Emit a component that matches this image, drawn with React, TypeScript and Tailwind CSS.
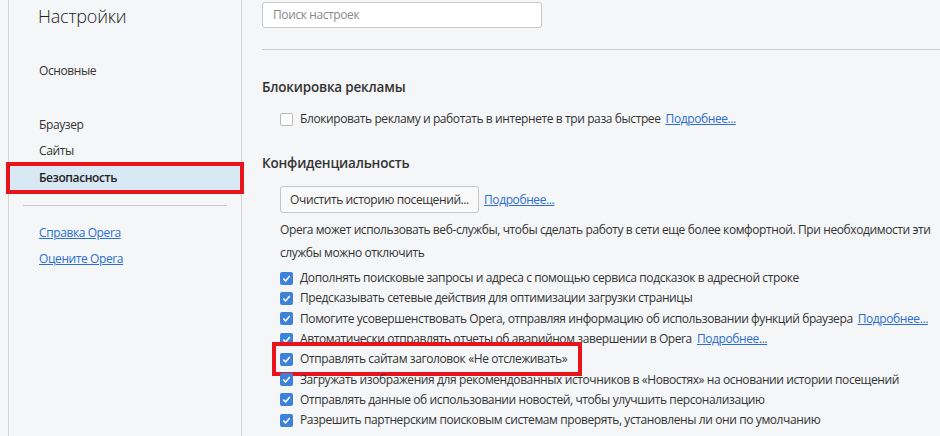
import React from "react";

const font = { fontFamily: '"Open Sans", "Noto Sans", sans-serif' };

function Check({ checked }: { checked?: boolean }) {
  if (!checked) {
    return <span className="inline-block w-[13px] h-[13px] shrink-0 rounded-[2px] border border-[#b9b9b9] bg-white" />;
  }
  return (
    <span className="inline-flex w-[13px] h-[13px] shrink-0 items-center justify-center rounded-[2px] bg-[#3d82d8]">
      <svg width="9" height="9" viewBox="0 0 9 9">
        <path d="M1.3 4.6 L3.6 6.9 L7.8 1.9" fill="none" stroke="white" strokeWidth="1.6" />
      </svg>
    </span>
  );
}

function More() {
  return <a className="text-[#2b6fd0] underline ml-[5px] cursor-pointer">Подробнее...</a>;
}

const options: { text: string; more?: boolean }[] = [
  { text: "Дополнять поисковые запросы и адреса с помощью сервиса подсказок в адресной строке" },
  { text: "Предсказывать сетевые действия для оптимизации загрузки страницы" },
  { text: "Помогите усовершенствовать Opera, отправляя информацию об использовании функций браузера", more: true },
  { text: "Автоматически отправлять отчеты об аварийном завершении в Opera", more: true },
  { text: "Отправлять сайтам заголовок «Не отслеживать»" },
  { text: "Загружать изображения для рекомендованных источников в «Новостях» на основании истории посещений" },
  { text: "Отправлять данные об использовании новостей, чтобы улучшить персонализацию" },
  { text: "Разрешить партнерским поисковым системам проверять, установлены ли они по умолчанию" },
];

export default function App() {
  return (
    <div className="w-[940px] h-[436px] overflow-hidden flex bg-[#f5f6f8] text-[#333] text-[12px] tracking-[-0.4px]" style={font}>
      <aside className="ml-[8px] w-[234px] shrink-0 border-l border-r border-[#d4d4d4] h-full">
        <h1 className="pl-[29px] pt-[3px] text-[18px] leading-[26px] font-light tracking-[-0.2px] text-[#222]">Настройки</h1>
        <div className="mt-[32px] pl-[30px] leading-[20px]">Основные</div>
        <div className="mt-[34px] pl-[30px] leading-[20px]">Браузер</div>
        <div className="mt-[6px] pl-[30px] leading-[20px]">Сайты</div>
        <div className="relative mt-[4px]">
          <div className="h-[26px] bg-[#d9e8f5] pl-[30px] leading-[26px] font-semibold text-[#222]">Безопасность</div>
          <div className="absolute left-[-3px] right-[-3px] top-[-3px] bottom-[-3px] border-[4px] border-[#e8141c]" />
        </div>
        <div className="mx-[14px] mt-[14px] border-t border-[#c9c9c9]" />
        <div className="mt-[17px] pl-[30px] leading-[20px]">
          <a className="text-[#2b6fd0] underline">Справка Opera</a>
        </div>
        <div className="mt-[6px] pl-[30px] leading-[20px]">
          <a className="text-[#2b6fd0] underline">Оцените Opera</a>
        </div>
      </aside>

      <main className="flex-1 pl-[20px] pt-[2px]">
        <div className="w-[280px] h-[26px] rounded-[3px] border border-[#c8c8c8] bg-white px-[10px] leading-[24px] text-[#8a8a8a]">
          Поиск настроек
        </div>
        <div className="mt-[21px] border-t border-[#cfcfcf]" />

        <h2 className="mt-[27px] text-[13.5px] leading-[20px] font-semibold tracking-[-0.2px] text-[#333]">Блокировка рекламы</h2>
        <div className="mt-[12px] ml-[18px] flex items-center gap-[7px] leading-[20px]">
          <Check />
          <span>
            Блокировать рекламу и работать в интернете в три раза быстрее
            <More />
          </span>
        </div>

        <h2 className="mt-[24px] text-[13.5px] leading-[20px] font-semibold tracking-[-0.2px] text-[#333]">Конфиденциальность</h2>
        <div className="mt-[13px] ml-[18px] flex items-center">
          <button className="h-[27px] w-[199px] whitespace-nowrap rounded-[3px] border border-[#c6c6c6] bg-[#f9f9f9] text-[#333]">
            Очистить историю посещений...
          </button>
          <More />
        </div>
        <p className="mt-[5px] ml-[18px] leading-[23px] whitespace-nowrap">
          Opera может использовать веб-службы, чтобы сделать работу в сети еще более комфортной. При необходимости эти
          <br />
          службы можно отключить
        </p>

        <div className="mt-[4px] ml-[18px] flex flex-col">
          {options.map((o, i) => (
            <div key={i} className="relative flex items-center gap-[7px] h-[20.3px] whitespace-nowrap">
              <Check checked />
              <span>
                {o.text}
                {o.more && <More />}
              </span>
              {i === 4 && (
                <div className="absolute left-[-8px] w-[310px] top-[-7px] bottom-[-7px] border-[4px] border-[#e8141c]" />
              )}
            </div>
          ))}
        </div>
      </main>
    </div>
  );
}
